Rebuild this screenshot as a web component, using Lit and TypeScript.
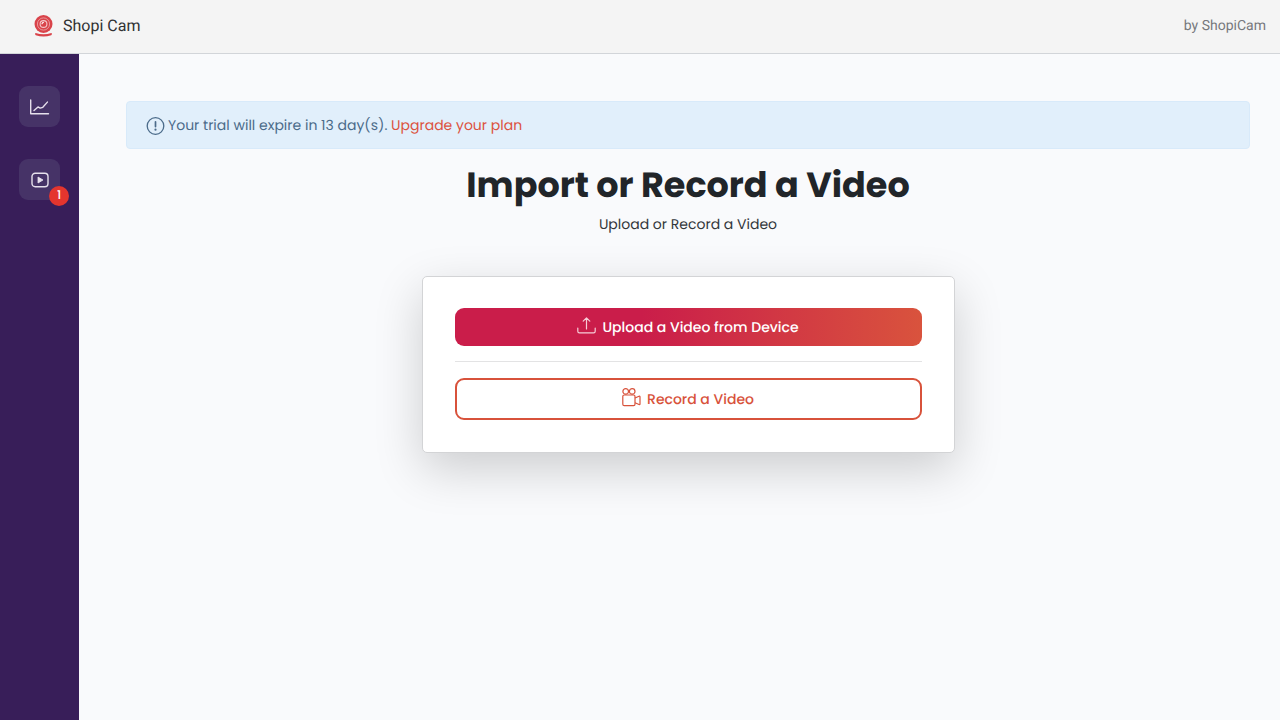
import { LitElement, html, css } from "lit";
import { customElement } from "lit/decorators.js";

@customElement("app-root")
export class AppRoot extends LitElement {
  static styles = css`
    :host {
      display: flex;
      flex-direction: column;
      min-height: 100vh;
      background: #f9fafc;
      color: #212529;
      font-family: Poppins, Inter, "Open Sans", sans-serif;
      font-size: 14px;
      line-height: 20px;
      text-rendering: geometricPrecision;
    }
    * {
      box-sizing: border-box;
    }
    .topbar {
      display: flex;
      align-items: center;
      justify-content: space-between;
      height: 54px;
      padding: 0 14px 1px 34px;
      background: #f4f4f4;
      border-bottom: 1px solid #d2d5d9;
      font-family: Roboto, sans-serif;
    }
    .brand {
      display: flex;
      align-items: center;
      gap: 10px;
      font-size: 16px;
      color: #303133;
    }
    .brand svg,
    .side-link svg,
    .alert svg,
    .btn svg {
      display: block;
      flex: none;
    }
    .by {
      font-size: 14px;
      color: #77797d;
    }
    .body {
      display: flex;
      flex: 1;
    }
    .sidebar {
      display: flex;
      flex-direction: column;
      align-items: center;
      gap: 32px;
      width: 79px;
      flex: none;
      padding-top: 32px;
      background: #381e59;
    }
    .side-link {
      position: relative;
      display: grid;
      place-items: center;
      width: 41px;
      height: 41px;
      border-radius: 9px;
      background: #463367;
      color: #e6e0ec;
      text-decoration: none;
    }
    .badge {
      position: absolute;
      right: -9px;
      bottom: -6px;
      width: 20px;
      height: 20px;
      border-radius: 50%;
      background: #e4352e;
      color: #fff;
      font-size: 12px;
      font-weight: 500;
      text-align: center;
    }
    .main {
      flex: 1;
      min-width: 0;
      display: flex;
      flex-direction: column;
      align-items: center;
      padding: 47px 30px 32px 47px;
    }
    .alert {
      display: flex;
      align-items: center;
      gap: 3px;
      align-self: stretch;
      min-height: 48px;
      padding: 0 19px;
      border: 1px solid #d8eafa;
      border-radius: 4px;
      background: #e1effb;
      color: #4b6b8a;
    }
    .alert p {
      margin: 0;
    }
    .alert a {
      color: #dc5240;
      text-decoration: none;
    }
    h1 {
      margin: 17px 0 0;
      font-size: 35px;
      line-height: 40px;
      font-weight: 700;
    }
    .lead {
      margin: 8px 0 0;
      color: #33373b;
    }
    .card {
      display: flex;
      flex-direction: column;
      width: 100%;
      max-width: 533px;
      margin-top: 42px;
      padding: 31px 32px 32px;
      border: 1px solid #d3d4d6;
      border-radius: 5px;
      background: #fff;
      box-shadow: 0 16px 48px rgba(0, 0, 0, 0.18);
    }
    .btn {
      display: flex;
      align-items: center;
      justify-content: center;
      gap: 6px;
      height: 38px;
      padding: 0 12px;
      border: 0;
      border-radius: 9px;
      font: inherit;
      font-weight: 500;
      text-rendering: inherit;
      cursor: pointer;
    }
    .primary {
      background: linear-gradient(90deg, #ca1d4a 40%, #d9533d);
      color: #fff;
    }
    .outline {
      height: 42px;
      border: 2px solid #d8523b;
      background: #fff;
      color: #d8523b;
    }
    hr {
      width: 100%;
      margin: 15px 0 16px;
      border: 0;
      border-top: 1px solid #e3e3e4;
    }
  `;

  render() {
    return html`
      <header class="topbar">
        <div class="brand">
          <svg width="19" height="22" viewBox="0 0 19 22" aria-hidden="true">
            <circle cx="9.5" cy="9" r="9" fill="#d9434a" />
            <circle cx="9.5" cy="9" r="6.1" fill="none" stroke="#eb9fa2" stroke-width=".9" />
            <circle cx="9.5" cy="9" r="3.4" fill="#d9434a" stroke="#f3c8ca" stroke-width="1.1" />
            <path d="M8 9.2A1.7 1.7 0 0 1 9.8 7.4" fill="none" stroke="#fff" stroke-width="1.1" />
            <path d="M1.6 18Q9.5 20.6 17.4 18Q18.6 19.2 17.2 20.2Q9.5 22.6 1.8 20.2Q.4 19.2 1.6 18Z" fill="#d9434a" />
          </svg>
          <span>Shopi Cam</span>
        </div>
        <span class="by">by ShopiCam</span>
      </header>
      <div class="body">
        <nav class="sidebar" aria-label="Main">
          <a class="side-link" href="#analytics" aria-label="Analytics">
            <svg width="20" height="16" viewBox="0 0 20 16" fill="none" stroke="currentColor" stroke-width="1.4" stroke-linecap="round" stroke-linejoin="round">
              <path d="M.7 1v13.8h17.8" />
              <path d="M4 11.6 8 7.9l2.2 1.2 2.6-.8 4.6-5.2" />
            </svg>
          </a>
          <a class="side-link" href="#videos" aria-label="Videos">
            <svg width="18" height="16" viewBox="0 0 18 16" fill="none" stroke="currentColor" stroke-width="1.4">
              <rect x="1" y="1.2" width="16" height="13.6" rx="3.2" />
              <path d="M7 5v6l5-3z" fill="currentColor" stroke-width=".8" stroke-linejoin="round" />
            </svg>
            <span class="badge">1</span>
          </a>
        </nav>
        <main class="main">
          <div class="alert" role="status">
            <svg width="19" height="19" viewBox="0 0 19 19" fill="none" stroke="currentColor" stroke-width="1.3" stroke-linecap="round" aria-hidden="true">
              <circle cx="9.5" cy="10" r="8.3" />
              <path d="M9.5 5.8v4.8" stroke-width="1.7" />
              <circle cx="9.5" cy="13.7" r="1.1" fill="currentColor" stroke="none" />
            </svg>
            <p>Your trial will expire in 13 day(s). <a href="#plans">Upgrade your plan</a></p>
          </div>
          <h1>Import or Record a Video</h1>
          <p class="lead">Upload or Record a Video</p>
          <section class="card">
            <button class="btn primary" type="button">
              <svg width="19" height="20" viewBox="0 0 19 20" fill="none" stroke="#f6cdd7" stroke-width="1.2" stroke-linecap="round" stroke-linejoin="round" aria-hidden="true">
                <path d="M.8 11v3.2q0 1.6 1.6 1.6h14.2q1.6 0 1.6-1.6v-3.2" />
                <path d="M9.5 12V.8M6.2 4.1l3.3-3.3 3.3 3.3" />
              </svg>
              <span>Upload a Video from Device</span>
            </button>
            <hr />
            <button class="btn outline" type="button">
              <svg width="19" height="22" viewBox="0 0 19 22" fill="none" stroke="currentColor" stroke-width="1.2" stroke-linejoin="round" aria-hidden="true">
                <circle cx="3.7" cy="3.4" r="2.8" />
                <circle cx="10.2" cy="3.4" r="2.8" />
                <rect x=".8" y="7" width="12.2" height="10.6" rx="1.4" />
                <path d="M13 10l4-1.8q1-.3 1 .7v7q0 1-1 .6l-4-1.8" />
              </svg>
              <span>Record a Video</span>
            </button>
          </section>
        </main>
      </div>
    `;
  }
}
